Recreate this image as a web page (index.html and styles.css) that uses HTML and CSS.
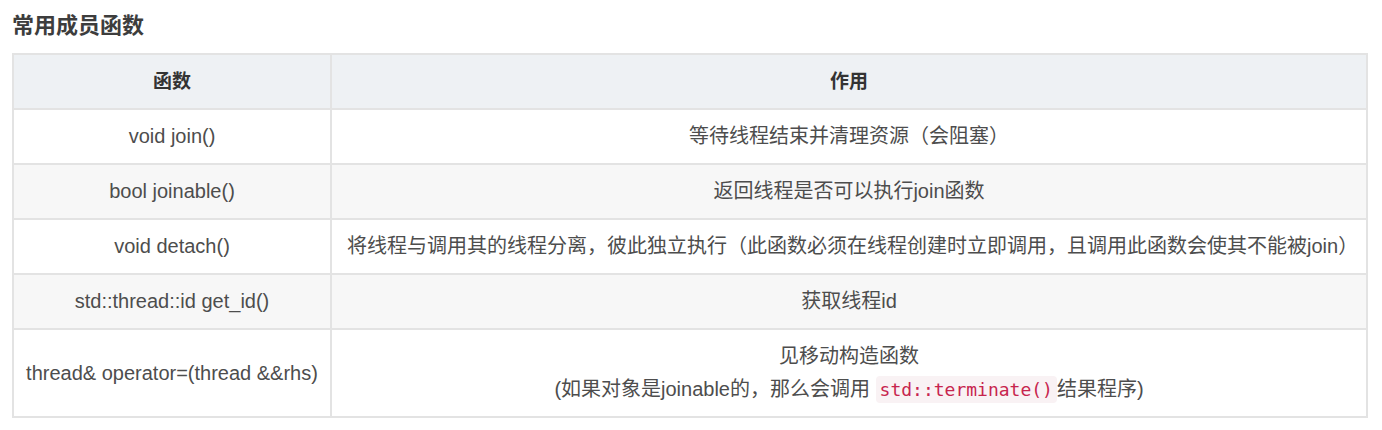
FILE: index.html
```html
<!DOCTYPE html>
<html lang="zh-CN">
<head>
  <meta charset="UTF-8">
  <title>常用成员函数</title>
  <link rel="stylesheet" href="styles.css">
</head>
<body>
  <h2>常用成员函数</h2>
  <!-- std::thread member functions -->
  <table>
    <thead>
      <tr>
        <th class="col-func">函数</th>
        <th>作用</th>
      </tr>
    </thead>
    <tbody>
      <tr>
        <td class="func">void join()</td>
        <td>等待线程结束并清理资源（会阻塞）</td>
      </tr>
      <tr>
        <td class="func">bool joinable()</td>
        <td>返回线程是否可以执行join函数</td>
      </tr>
      <tr>
        <td class="func">void detach()</td>
        <td>将线程与调用其的线程分离，彼此独立执行（此函数必须在线程创建时立即调用，且调用此函数会使其不能被join）</td>
      </tr>
      <tr>
        <td class="func">std::thread::id get_id()</td>
        <td>获取线程id</td>
      </tr>
      <tr>
        <td class="func">thread&amp; operator=(thread &amp;&amp;rhs)</td>
        <td>见移动构造函数<br>(如果对象是joinable的，那么会调用 <code>std::terminate()</code>结果程序)</td>
      </tr>
    </tbody>
  </table>
</body>
</html>
```

FILE: styles.css
```css
body {
  margin: 0;
  padding: 11px 14px 0 12px;
  font-family: "Liberation Sans", "Noto Sans CJK SC", sans-serif;
  color: #4d4d4d;
  background: #fff;
}
h2 {
  margin: 0 0 12px 0;
  font-size: 22px;
  line-height: 30px;
  font-weight: bold;
  color: #3d3d3d;
}
table {
  width: 100%;
  border-collapse: collapse;
  border: 2px solid #e3e3e3;
  font-size: 20px;
}
th, td {
  border: 2px solid #e3e3e3;
  padding: 10px 15px;
  line-height: 33px;
  text-align: center;
  font-weight: normal;
}
th {
  background: #eef1f4;
  font-weight: bold;
  color: #333;
  font-size: 19px;
}
.col-func {
  width: 286px;
}
.func {
  white-space: nowrap;
  padding-left: 8px;
  padding-right: 8px;
}
tbody tr:nth-child(even) td {
  background: #f7f7f7;
}
code {
  font-family: "DejaVu Sans Mono", monospace;
  font-size: 18px;
  color: #c7254e;
  background: #f9f2f4;
  padding: 3px 4px;
  border-radius: 4px;
}
```
